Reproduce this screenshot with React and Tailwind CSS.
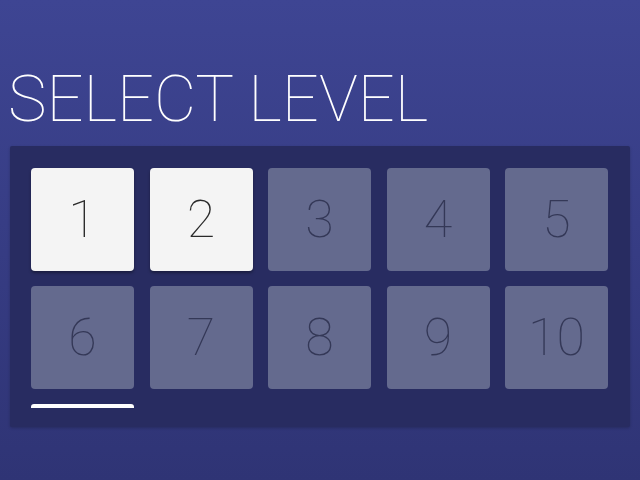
import React from "react";

const levels = [1, 2, 3, 4, 5, 6, 7, 8, 9, 10];
const unlocked = 2;

function LevelTile({ n, open }) {
  return (
    <div
      className={
        (open
          ? "bg-[#f4f4f4] text-[#2a2a2a] shadow-[0_2px_3px_rgba(0,0,0,0.35)]"
          : "bg-[#646a8e] text-[#343857]") +
        " h-[103px] rounded-[4px] flex items-center justify-center text-[52px] font-thin leading-none"
      }
    >
      {n}
    </div>
  );
}

export default function App() {
  return (
    <div
      className="w-[640px] h-[480px] overflow-hidden bg-gradient-to-b from-[#3e4593] to-[#2f3475] flex flex-col"
      style={{ fontFamily: "'Roboto Thin', Roboto, 'Noto Sans', sans-serif" }}
    >
      <h1 className="mt-[66px] ml-[8px] text-[65px] font-thin leading-[66px] text-white">
        SELECT LEVEL
      </h1>
      <div className="mt-[14px] mx-[10px] bg-[#282c61] rounded-[2px] pt-[22px] pl-[21px] pr-[22px] pb-[19px] shadow-[0_1px_3px_rgba(0,0,0,0.2)]">
        <div className="grid grid-cols-5 gap-x-[15.5px] gap-y-[15px]">
          {levels.map((n) => (
            <LevelTile key={n} n={n} open={n <= unlocked} />
          ))}
        </div>
        <div className="grid grid-cols-5 gap-x-[15.5px] mt-[15px]">
          <div className="h-[4px] bg-white rounded-t-[3px]" />
        </div>
      </div>
    </div>
  );
}
